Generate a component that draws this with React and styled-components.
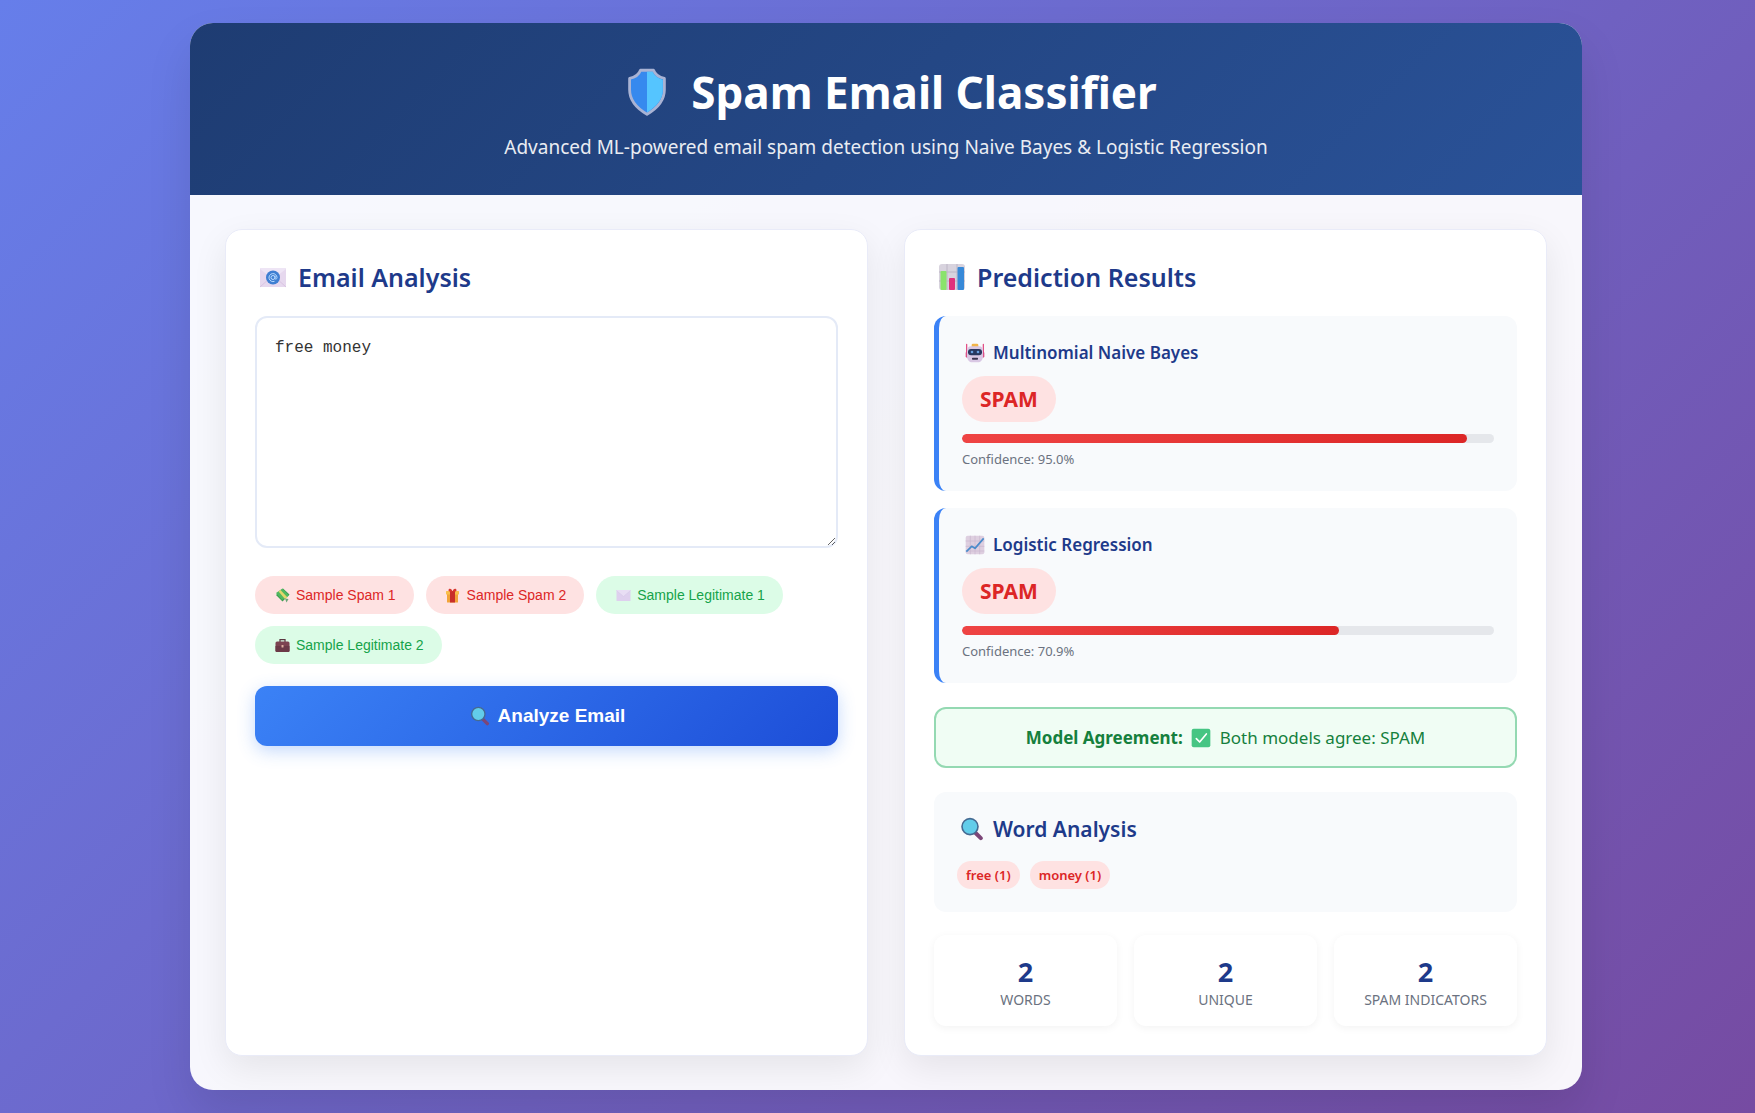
import React, { useState } from "react";
import styled, { createGlobalStyle } from "styled-components";

const GlobalStyle = createGlobalStyle`
  *, *::before, *::after { box-sizing: border-box; margin: 0; padding: 0; }
  body {
    min-height: 100vh;
    background: linear-gradient(135deg, #667eea 0%, #764ba2 100%) no-repeat;
    font-family: "Noto Sans", "Open Sans", sans-serif;
    color: #333;
  }
`;

const Page = styled.div`
  padding: 23px 23px 22px 40px;
`;

const Container = styled.main`
  max-width: 1392px;
  margin: 0 auto;
  overflow: hidden;
  border-radius: 23px;
  background: rgba(255, 255, 255, 0.95);
  box-shadow: 0 23px 46px rgba(0, 0, 0, 0.1);
`;

const Header = styled.header`
  padding: 36px 35px 34px;
  text-align: center;
  color: #fff;
  background: linear-gradient(135deg, #1e3c72 0%, #2a5298 100%);
`;

const Title = styled.h1`
  display: flex;
  align-items: center;
  justify-content: center;
  gap: 12px;
  margin-bottom: 9px;
  font-size: 44px;
  line-height: 66px;
  font-weight: 700;
`;

const Subtitle = styled.p`
  font-size: 19px;
  line-height: 27px;
  opacity: 0.9;
`;

const Columns = styled.div`
  display: grid;
  grid-template-columns: 1fr 1fr;
  gap: 36px;
  padding: 34px 35px;
`;

const Card = styled.section`
  padding: 29px;
  border: 1px solid #e9ebf8;
  border-radius: 17px;
  background: #fff;
  box-shadow: 0 12px 35px rgba(0, 0, 0, 0.08);
`;

const CardTitle = styled.h2`
  display: flex;
  align-items: center;
  gap: 8px;
  margin-bottom: 21px;
  font-size: 25px;
  line-height: 36px;
  font-weight: 600;
  color: #1e3a8a;
`;

const IconBox = styled.span`
  display: inline-flex;
  flex: none;
  align-items: center;
  justify-content: center;
  width: ${(p) => p.$box}px;
  svg { display: block; width: ${(p) => p.$size}px; height: ${(p) => p.$size}px; }
`;

const EmailInput = styled.textarea`
  display: block;
  width: 100%;
  height: 232px;
  margin-bottom: 28px;
  padding: 18px;
  border: 2px solid #e4eaf7;
  border-radius: 12px;
  background: #fff;
  color: #333;
  font: 16px/24px "Liberation Mono", "Courier New", monospace;
  resize: vertical;
  outline: none;
`;

const Samples = styled.div`
  display: flex;
  flex-wrap: wrap;
  gap: 12px;
  margin-bottom: 22px;
`;

const SampleButton = styled.button`
  display: flex;
  align-items: center;
  gap: 5px;
  padding: 0 18px;
  border: 0;
  border-radius: 23px;
  font: 14px/38px "Liberation Sans", Arial, sans-serif;
  cursor: pointer;
  color: ${(p) => (p.$spam ? "#dc2626" : "#16a34a")};
  background: ${(p) => (p.$spam ? "#fee2e2" : "#dcfce7")};
`;

const AnalyzeButton = styled.button`
  display: flex;
  align-items: center;
  justify-content: center;
  gap: 5px;
  width: 100%;
  border: 0;
  border-radius: 12px;
  color: #fff;
  font: 700 19px/60px "Liberation Sans", Arial, sans-serif;
  cursor: pointer;
  background: linear-gradient(135deg, #3b82f6 0%, #1d4ed8 100%);
  box-shadow: 0 5px 17px rgba(59, 130, 246, 0.3);
`;

const Result = styled.article`
  margin-bottom: ${(p) => (p.$last ? 24 : 17)}px;
  padding: 23px;
  border-left: 5px solid #3b82f6;
  border-radius: 12px;
  background: #f8fafc;
`;

const ModelName = styled.h3`
  display: flex;
  align-items: center;
  gap: 5px;
  margin-bottom: 10px;
  font-size: 17px;
  line-height: 27px;
  font-weight: 600;
  color: #1e3a8a;
`;

const Verdict = styled.p`
  width: fit-content;
  margin-bottom: 12px;
  padding: 0 18px;
  border-radius: 23px;
  font-size: 21px;
  line-height: 46px;
  font-weight: 700;
  color: #dc2626;
  background: #fee2e2;
`;

const Track = styled.div`
  height: 9px;
  margin-bottom: 7px;
  overflow: hidden;
  border-radius: 5px;
  background: #e5e7eb;
`;

const Fill = styled.div`
  height: 100%;
  border-radius: 5px;
  background: linear-gradient(135deg, #ef4444, #dc2626);
`;

const Confidence = styled.p`
  font-size: 13px;
  line-height: 18px;
  color: #6b7280;
`;

const Agreement = styled.p`
  display: flex;
  align-items: center;
  justify-content: center;
  gap: 6px;
  margin-bottom: 24px;
  padding: 16px;
  border: 2px solid #94d9b2;
  border-radius: 12px;
  font-size: 17px;
  line-height: 25px;
  color: #15803d;
  background: #f0fdf4;
`;

const WordPanel = styled.section`
  margin-bottom: 23px;
  padding: 23px;
  border-radius: 12px;
  background: #f8fafc;
`;

const WordTitle = styled.h3`
  display: flex;
  align-items: center;
  gap: 7px;
  margin-bottom: 18px;
  font-size: 21px;
  line-height: 28px;
  font-weight: 600;
  color: #1e3a8a;
`;

const Tags = styled.ul`
  display: flex;
  flex-wrap: wrap;
  gap: 10px;
  list-style: none;
`;

const Tag = styled.li`
  padding: 0 9px;
  border-radius: 17px;
  font-size: 13px;
  line-height: 28px;
  font-weight: 600;
  color: #dc2626;
  background: #fee2e2;
`;

const Stats = styled.dl`
  display: grid;
  grid-template-columns: repeat(3, 1fr);
  gap: 17px;
`;

const Stat = styled.div`
  display: flex;
  flex-direction: column-reverse;
  padding: 18px 18px 17px;
  border-radius: 12px;
  text-align: center;
  background: #fff;
  box-shadow: 0 2px 9px rgba(0, 0, 0, 0.05);
`;

const StatValue = styled.dd`
  font-size: 27px;
  line-height: 37px;
  font-weight: 700;
  color: #1e3a8a;
`;

const StatLabel = styled.dt`
  font-size: 14px;
  line-height: 19px;
  white-space: nowrap;
  text-transform: uppercase;
  color: #6b7280;
`;

const art = {
  shield: (
    <>
      <path d="M14 3H26C27.500 7 31 9.500 36 10.500V21C36 31 29.500 38 20 43.500C10.500 38 4 31 4 21V10.500C9 9.500 12.500 7 14 3Z" fill="#3689ee" stroke="#a9b3d4" strokeWidth="2.600" strokeLinejoin="round" />
      <path d="M20 4.400H25.100C26.800 8.200 30 10.700 34.600 11.700V21C34.600 30 28.500 36.600 20 41.800Z" fill="#55c5ff" />
    </>
  ),
  mail: (
    <>
      <rect x="2" y="6" width="26" height="19" rx="1" fill="#e6d8ee" />
      <path d="M2 7L15 17L28 7V6H2Z" fill="#eee5f5" />
      <path d="M2 25L12 16M28 25L18 16" stroke="#d9c4e2" />
      <circle cx="15" cy="15.500" r="7" fill="#3f7fd2" />
      <circle cx="15" cy="15.500" r="2" fill="none" stroke="#b9dbff" />
      <path d="M17 13.500V16.500C17.500 18 19 17 19 15.500A4 4 0 1 0 16.500 19.300" fill="none" stroke="#b9dbff" />
    </>
  ),
  bars: (
    <>
      <rect x="2" y="2" width="26" height="26" rx="3" fill="#d8d3de" />
      <path d="M2 10H28M2 19H28M10 2V28M20 2V28" stroke="#bdb6c6" />
      <rect x="3.500" y="9" width="6" height="19" rx="1" fill="#8ae36c" />
      <rect x="12" y="16" width="6" height="12" rx="1" fill="#e0317c" />
      <rect x="20.500" y="5" width="6.500" height="23" rx="1" fill="#3789d8" />
    </>
  ),
  robot: (
    <>
      <path d="M2.500 2V18M27.500 2V18" stroke="#e0457f" strokeWidth="1.800" strokeLinecap="round" />
      <rect x="1" y="13" width="4" height="9" rx="2" fill="#d95086" />
      <rect x="25" y="13" width="4" height="9" rx="2" fill="#d95086" />
      <rect x="10" y="1" width="10" height="6" rx="2" fill="#f2b54a" />
      <path d="M9 5H21C25 5 27 8 27 12V19C27 25 24 29 19 29H11C6 29 3 25 3 19V12C3 8 5 5 9 5Z" fill="#d9c8e4" />
      <rect x="4.500" y="9" width="21" height="9.500" rx="4.500" fill="#28375e" />
      <circle cx="10.500" cy="13.500" r="2" fill="#6a9fe0" />
      <circle cx="19.500" cy="13.500" r="2" fill="#6a9fe0" />
      <rect x="10.500" y="22" width="9" height="3" rx="1" fill="#3c3450" />
    </>
  ),
  trend: (
    <>
      <rect x="1" y="1" width="28" height="28" rx="3" fill="#decfe0" />
      <path d="M1 9H29M1 17H29M1 24H29M8 1V29M15 1V29M22 1V29" stroke="#c9b6cf" />
      <path d="M2 25L10 17L15 20L28 5" fill="none" stroke="#4a8bcb" strokeWidth="2.500" strokeLinejoin="round" />
    </>
  ),
  lens: (
    <>
      <path d="M19.500 20L26 26.500" stroke="#7c4678" strokeWidth="5" strokeLinecap="round" />
      <circle cx="12.500" cy="12" r="10" fill="#62cdea" stroke="#456a92" strokeWidth="2" />
    </>
  ),
  cash: (
    <>
      <path d="M2 14L16 1L29 13L15 27Z" fill="#3a9e4e" />
      <path d="M2 10L15 1L28 15L14 24Z" fill="#4fb860" />
      <path d="M7 7L11 4L25 19L20 22Z" fill="#e2d66c" />
      <path d="M20 21L27 22L23 29Z" fill="#6aa578" />
    </>
  ),
  gift: (
    <>
      <rect x="4" y="10" width="22" height="19" rx="1" fill="#f2a43a" />
      <rect x="2" y="6" width="26" height="7" rx="1" fill="#f8bf4c" />
      <path d="M10 6H20V29H10Z" fill="#c82f2a" />
      <path d="M15 7C8 9 5 5 8 2C11 0 14 3 15 7C16 3 19 0 22 2C25 5 22 9 15 7Z" fill="#d8382f" />
    </>
  ),
  letter: (
    <>
      <rect x="1" y="4" width="28" height="22" rx="1" fill="#ded0ee" />
      <path d="M1 5L15 17L29 5V4H1Z" fill="#e8def4" />
      <path d="M1 5L15 17L29 5" fill="none" stroke="#d3c4e6" />
    </>
  ),
  briefcase: (
    <>
      <path d="M10 8V3H20V8" fill="none" stroke="#5a3640" strokeWidth="2.500" />
      <rect x="1" y="7" width="28" height="21" rx="3" fill="#7c4351" />
      <path d="M1 16H29V26Q29 28 26 28H4Q1 28 1 26Z" fill="#6b3947" />
      <rect x="13" y="14" width="4" height="5" rx="1" fill="#e0b0a0" />
    </>
  ),
  check: (
    <>
      <rect x="1" y="1" width="28" height="28" rx="3" fill="#46c583" />
      <path d="M8 16L13 21L23 9" fill="none" stroke="#fff" strokeWidth="2.500" strokeLinecap="round" strokeLinejoin="round" />
    </>
  ),
};

function Emoji({ name, box, size }) {
  return (
    <IconBox $box={box} $size={size} aria-hidden="true">
      <svg viewBox={name === "shield" ? "-3 0 46 46" : "0 0 30 30"}>{art[name]}</svg>
    </IconBox>
  );
}

const samples = [
  { label: "Sample Spam 1", icon: "cash", spam: true, text: "free money" },
  { label: "Sample Spam 2", icon: "gift", spam: true, text: "free prize" },
  { label: "Sample Legitimate 1", icon: "letter", spam: false, text: "meeting notes" },
  { label: "Sample Legitimate 2", icon: "briefcase", spam: false, text: "project update" },
];

const results = [
  { model: "Multinomial Naive Bayes", icon: "robot", confidence: 95 },
  { model: "Logistic Regression", icon: "trend", confidence: 70.9 },
];

const stats = [["Words", 2], ["Unique", 2], ["Spam Indicators", 2]];

export default function App() {
  const [email, setEmail] = useState("free money");
  return (
    <Page>
      <GlobalStyle />
      <Container>
        <Header>
          <Title><Emoji name="shield" box={64} size={50} />Spam Email Classifier</Title>
          <Subtitle>Advanced ML-powered email spam detection using Naive Bayes &amp; Logistic Regression</Subtitle>
        </Header>
        <Columns>
          <Card>
            <CardTitle id="email-title"><Emoji name="mail" box={35} size={30} />Email Analysis</CardTitle>
            <EmailInput
              aria-labelledby="email-title"
              spellCheck={false}
              value={email}
              onChange={(e) => setEmail(e.target.value)}
            />
            <Samples>
              {samples.map((s) => (
                <SampleButton key={s.label} type="button" $spam={s.spam} onClick={() => setEmail(s.text)}>
                  <Emoji name={s.icon} box={18} size={15} />{s.label}
                </SampleButton>
              ))}
            </Samples>
            <AnalyzeButton type="button"><Emoji name="lens" box={25} size={20} />Analyze Email</AnalyzeButton>
          </Card>
          <Card>
            <CardTitle><Emoji name="bars" box={35} size={30} />Prediction Results</CardTitle>
            {results.map((r, i) => (
              <Result key={r.model} $last={i === results.length - 1}>
                <ModelName><Emoji name={r.icon} box={26} size={20} />{r.model}</ModelName>
                <Verdict>SPAM</Verdict>
                <Track><Fill style={{ width: `${r.confidence}%` }} /></Track>
                <Confidence>Confidence: {r.confidence.toFixed(1)}%</Confidence>
              </Result>
            ))}
            <Agreement>
              <strong>Model Agreement:</strong>
              <Emoji name="check" box={25} size={20} />
              <span>Both models agree: SPAM</span>
            </Agreement>
            <WordPanel>
              <WordTitle><Emoji name="lens" box={29} size={24} />Word Analysis</WordTitle>
              <Tags>
                <Tag>free (1)</Tag>
                <Tag>money (1)</Tag>
              </Tags>
            </WordPanel>
            <Stats>
              {stats.map(([label, value]) => (
                <Stat key={label}>
                  <StatLabel>{label}</StatLabel>
                  <StatValue>{value}</StatValue>
                </Stat>
              ))}
            </Stats>
          </Card>
        </Columns>
      </Container>
    </Page>
  );
}
